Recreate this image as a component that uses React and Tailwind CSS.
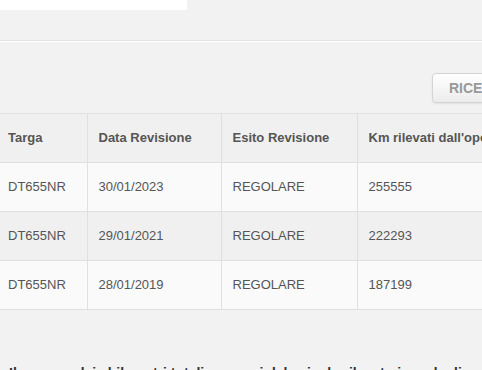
const rows = [
  { targa: 'DT655NR', data: '30/01/2023', esito: 'REGOLARE', km: '255555' },
  { targa: 'DT655NR', data: '29/01/2021', esito: 'REGOLARE', km: '222293' },
  { targa: 'DT655NR', data: '28/01/2019', esito: 'REGOLARE', km: '187199' },
]

function App() {
  return (
    <div className="w-[482px] h-[370px] overflow-hidden bg-[#f2f2f2] font-['Liberation_Sans',Arial,sans-serif] text-[#555]">
      {/* Search field strip */}
      <div className="h-[10px] w-[187px] bg-white" />

      <hr className="mt-[30px] border-0 border-t border-t-[#e2e2e2] border-b border-b-white" />

      {/* Actions */}
      <div className="mt-[31px] flex pl-[432px]">
        <button className="h-[30px] shrink-0 rounded-[4px] border border-[#d4d4d4] bg-gradient-to-b from-white to-[#ececec] px-4 text-[14px] font-bold text-[#999] shadow-[0_1px_2px_rgba(0,0,0,0.08)]">
          RICERCA
        </button>
      </div>

      {/* Revisioni */}
      <table className="mt-[10px] w-[760px] table-fixed border-collapse text-[13px]">
        <colgroup>
          <col className="w-[87px]" />
          <col className="w-[134px]" />
          <col className="w-[136px]" />
          <col className="w-[200px]" />
          <col className="w-[203px]" />
        </colgroup>
        <thead>
          <tr className="h-[49px] bg-[#f0f0f0] text-left">
            <th className="border-y border-r border-[#e0e0e0] pl-2 font-bold">Targa</th>
            <th className="border border-[#e0e0e0] pl-[11px] font-bold">Data Revisione</th>
            <th className="border border-[#e0e0e0] pl-[11px] font-bold">Esito Revisione</th>
            <th className="whitespace-nowrap border border-[#e0e0e0] pl-[11px] font-bold">Km rilevati dall'operatore</th>
            <th className="border border-[#e0e0e0] pl-[11px] font-bold">Note</th>
          </tr>
        </thead>
        <tbody>
          {rows.map((r, i) => (
            <tr key={r.data} className={`h-[49px] ${i % 2 === 0 ? 'bg-[#fafafa]' : 'bg-[#f0f0f0]'}`}>
              <td className="border-y border-r border-[#e0e0e0] pl-2">{r.targa}</td>
              <td className="border border-[#e0e0e0] pl-[11px]">{r.data}</td>
              <td className="border border-[#e0e0e0] pl-[11px]">{r.esito}</td>
              <td className="border border-[#e0e0e0] pl-[11px]">{r.km}</td>
              <td className="border border-[#e0e0e0] pl-[11px]"></td>
            </tr>
          ))}
        </tbody>
      </table>

      <p className="mt-[53px] whitespace-nowrap pl-[9px] text-[14px] leading-5 font-bold text-[#333]">
        Il numero dei chilometri totali percorsi dal veicolo rilevato in sede di revisione
      </p>
    </div>
  )
}

export default App
